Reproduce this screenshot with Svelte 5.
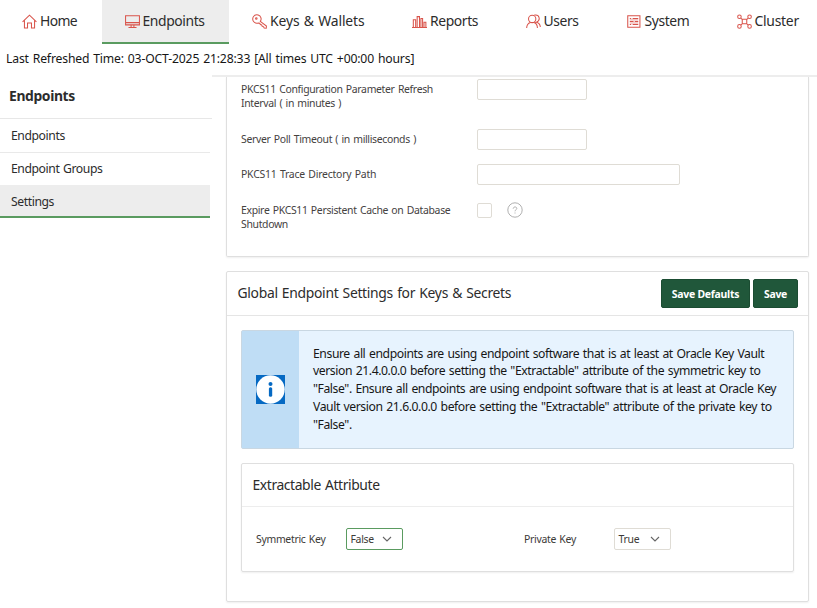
<script>
  const tabs = [
    { name: 'Home', icon: 'home', width: 102 },
    { name: 'Endpoints', icon: 'monitor', width: 127, active: true },
    { name: 'Keys & Wallets', icon: 'key', width: 160 },
    { name: 'Reports', icon: 'chart', width: 114 },
    { name: 'Users', icon: 'users', width: 101 },
    { name: 'System', icon: 'system', width: 110 },
    { name: 'Cluster', icon: 'cluster', width: 103 }
  ];
  const links = ['Endpoints', 'Endpoint Groups', 'Settings'];
</script>

{#snippet icon(name)}
  <svg class="icon" viewBox="0 0 16 16" fill="none" stroke="currentColor" stroke-width="1.1">
    {#if name === 'home'}
      <path d="M.6 8.4 8 1.3l7.4 7.1M2.6 6.7v8.2h3.3v-5.2h4.2v5.2h3.3V6.7" />
    {:else if name === 'monitor'}
      <path d="M.6 1.8h14.8v9.8H.6zM.6 9.2h14.8M6.5 11.6v2.8M9.5 11.6v2.8M3.7 14.4h8.6" />
    {:else if name === 'key'}
      <path d="M8.9 7.9a4.5 4.5 0 1 0-2.3 1.7l1.6.3.7 1.4 1.5.4.5 1.5 1.4.4.7 1.3 2.2.3.2-2.3z" /><circle cx="4.6" cy="4.8" r=".8" />
    {:else if name === 'chart'}
      <path d="M0 14.3h16M1.4 14V6.2h2.5V14M5.5 14V2.8H8V14M9.5 14V4.8h1.8V14M12.8 14V8.7h2V14" />
    {:else if name === 'users'}
      <circle cx="6.6" cy="5.3" r="3.9" /><path d="M.7 15c.1-3.5 1.4-5.2 4-6M8.6 9c2.6.8 3.5 2.7 3.6 6M8.9 1.2c6-1.1 6.8 6 2.2 7.6 2.8.8 4 2.5 4.2 5" />
    {:else if name === 'system'}
      <path d="M.8 1.8h13v12.4h-13zM3 4.8h1.5M6 4.8h6M3 8h4M8.2 8H12M3 11.2h1.5M6 11.2h6" /><path d="M3 6.3h9M3 9.6h9" stroke-width=".6" />
    {:else}
      <circle cx="2.6" cy="2.9" r="1.9" /><circle cx="13.4" cy="2.9" r="1.9" /><circle cx="2.6" cy="13.2" r="1.9" /><circle cx="13.4" cy="13.2" r="1.9" />
      <path d="M5.6 5.7h4.8v4.7H5.6zM4 4.3l1.8 1.6M12 4.3l-1.8 1.6M4 11.8l1.8-1.5M12 11.8l-1.8-1.5" />
    {/if}
  </svg>
{/snippet}

{#snippet chevron()}
  <svg class="chevron" viewBox="0 0 10 6" fill="none" stroke="#666" stroke-width="1.1"><path d="m1 1 4 4 4-4" /></svg>
{/snippet}

<div class="page">
  <nav>
    {#each tabs as tab}
      <div class="tab {tab.icon}" class:active={tab.active} style:width="{tab.width}px">{@render icon(tab.icon)}<span>{tab.name}</span></div>
    {/each}
  </nav>
  <div class="refreshed">Last Refreshed Time: 03-OCT-2025 21:28:33 [All times UTC +00:00 hours]</div>
  <div class="body">
    <aside>
      <h2>Endpoints</h2>
      {#each links as link}
        <div class="link" class:current={link === 'Settings'}>{link}</div>
      {/each}
    </aside>
    <main>
      <section class="card params">
        <div class="row first"><span class="label">PKCS11 Configuration Parameter Refresh<br />Interval ( in minutes )</span><div class="field"></div></div>
        <div class="row second"><span class="label">Server Poll Timeout ( in milliseconds )</span><div class="field"></div></div>
        <div class="row third"><span class="label">PKCS11 Trace Directory Path</span><div class="field wide"></div></div>
        <div class="row fourth"><span class="label">Expire PKCS11 Persistent Cache on Database<br />Shutdown</span><div class="check"></div>
          <svg class="help" viewBox="0 0 16 16" fill="none" stroke="#b0b0b0"><circle cx="8" cy="8" r="7.2" /><path d="M6.2 6.7c0-2.3 3.6-2.3 3.6-.2C9.8 7.8 8 7.7 8 9.3M8 10.5v1" /></svg>
        </div>
      </section>
      <section class="card global">
        <header><h3>Global Endpoint Settings for Keys &amp; Secrets</h3><button class="defaults">Save Defaults</button><button class="save">Save</button></header>
        <div class="alert">
          <div class="mark"><svg viewBox="0 0 29 29"><path fill="#0569c3" d="M0 0h29v29H0z" /><circle cx="14.5" cy="14.5" r="14.2" fill="#fff" /><circle cx="14.5" cy="9" r="2" fill="#0569c3" /><rect x="12.9" y="12.3" width="3.3" height="9.5" rx="1.5" fill="#0569c3" /></svg></div>
          <p>Ensure all endpoints are using endpoint software that is at least at Oracle Key Vault<br />version 21.4.0.0.0 before setting the "Extractable" attribute of the symmetric key to<br />"False". Ensure all endpoints are using endpoint software that is at least at Oracle Key<br />Vault version 21.6.0.0.0 before setting the "Extractable" attribute of the private key to<br />"False".</p>
        </div>
        <div class="attribute">
          <h3>Extractable Attribute</h3>
          <div class="choices">
            <span class="symmetric">Symmetric Key</span><div class="select focused"><span>False</span>{@render chevron()}</div>
            <span class="private">Private Key</span><div class="select"><span>True</span>{@render chevron()}</div>
          </div>
        </div>
      </section>
    </main>
  </div>
</div>

<style>
  :global(body) { background: #fff; }
  * { box-sizing: border-box; }
  .page { width: 817px; height: 608px; overflow: hidden; display: flex; flex-direction: column; color: #2c2c2c; background: #fff; font: 12.2px/17.78px "Noto Sans", sans-serif; letter-spacing: -.42px; word-spacing: .9px; white-space: nowrap; }
  nav { height: 44px; display: flex; flex: none; }
  .tab { flex: none; height: 44px; padding: 0 0 0 22.5px; display: flex; align-items: center; gap: 3px; font-size: 13.9px; letter-spacing: -.4px; border-bottom: 2px solid transparent; }
  .tab.active { background: #ededed; border-color: #5a9b60; }
  .tab.home { letter-spacing: -.65px; padding-left: 22px; }
  .tab.key { letter-spacing: -.12px; }
  .tab.key, .tab.chart { gap: 3.5px; }
  .tab.cluster { letter-spacing: -.25px; }
  .icon { width: 15px; height: 15px; color: #d9544b; flex: none; }
  .refreshed { height: 31px; flex: none; padding: 6px; color: #161616; letter-spacing: -.16px; }
  .body { display: flex; flex: 1; min-height: 0; }
  aside { width: 212px; flex: none; }
  h2 { margin: 0; height: 44px; padding: 12px 9px; border-bottom: 1px solid #e7e7e7; font-size: 13.9px; line-height: 18px; font-weight: 700; letter-spacing: -.38px; }
  .link { height: 33px; width: 210px; padding: 7px 11px; border-bottom: 1px solid #e9e9e9; }
  .link:nth-child(2) { height: 34px; padding-top: 8px; }
  .link.current { background: #ededed; border-bottom: 2px solid #5a9b60; padding-top: 8px; margin-top: -1px; }
  main { width: 605px; padding-left: 14px; border-top: 2px solid #ededed; }
  .card { width: 583px; border: 1px solid #dfdfdf; border-radius: 2px; box-shadow: 0 1px 2px #0001; }
  .params { height: 180px; border-top: 0; padding: 2px 14px; border-radius: 0 0 2px 2px; font-size: 10.45px; line-height: 14.2px; color: #45423f; letter-spacing: -.33px; }
  .row { display: flex; align-items: flex-start; }
  .row .label { width: 236px; padding-top: 3px; }
  .third .label { letter-spacing: -.22px; }
  .first { height: 50px; } .second { height: 35px; } .third { height: 36px; }
  .field { width: 110px; height: 21px; border: 1px solid #dfdcd5; border-radius: 2px; }
  .field.wide { width: 203px; }
  .check { width: 15px; height: 15px; margin-top: 3px; border: 1px solid #dfdcd5; border-radius: 2px; }
  .help { width: 16px; height: 16px; margin: 2px 0 0 15px; }
  .global { height: 331px; margin-top: 14px; }
  header { height: 44px; display: flex; align-items: center; padding: 0 10px 0 10.5px; border-bottom: 1px solid #e5e5e5; }
  h3 { margin: 0; flex: 1; font-size: 13.9px; line-height: 20px; font-weight: 400; letter-spacing: -.31px; }
  header h3 { padding-bottom: 1px; }
  button { height: 29px; padding: 0; border: 1px solid #1b4c32; border-radius: 2px; background: #20573a; color: #fff; font: 700 10.45px "Noto Sans", sans-serif; letter-spacing: -.25px; }
  .defaults { width: 89px; margin-right: 3px; } .save { width: 45px; }
  .alert { display: flex; height: 119px; margin: 14px 14px 0; border: 1px solid #c9d7e2; border-radius: 2px; background: #e7f3fe; color: #161616; }
  .mark { width: 57px; flex: none; background: #bfddf5; display: flex; align-items: center; justify-content: center; }
  .mark svg { width: 29px; height: 29px; }
  .alert p { margin: 13.5px 0 0 14px; }
  .attribute { height: 109px; margin: 14px 14px 0; border: 1px solid #dfdfdf; border-radius: 2px; box-shadow: 0 1px 2px #0001; }
  .attribute h3 { height: 43px; padding: 11px 10.5px 0; border-bottom: 1px solid #ededed; letter-spacing: -.4px; }
  .choices { display: flex; align-items: center; padding: 21px 14px; font-size: 10.45px; line-height: 14.2px; color: #3c3a37; letter-spacing: -.3px; }
  .symmetric, .private { width: 90px; }
  .private { margin-left: 121px; }
  .select { width: 57px; height: 22px; border: 1px solid #dfdcd5; border-radius: 2px; display: flex; align-items: center; justify-content: space-between; padding: 0 10px 0 3.5px; }
  .select.focused { border-color: #5a9b60; }
  .chevron { width: 10px; height: 6px; }
</style>
